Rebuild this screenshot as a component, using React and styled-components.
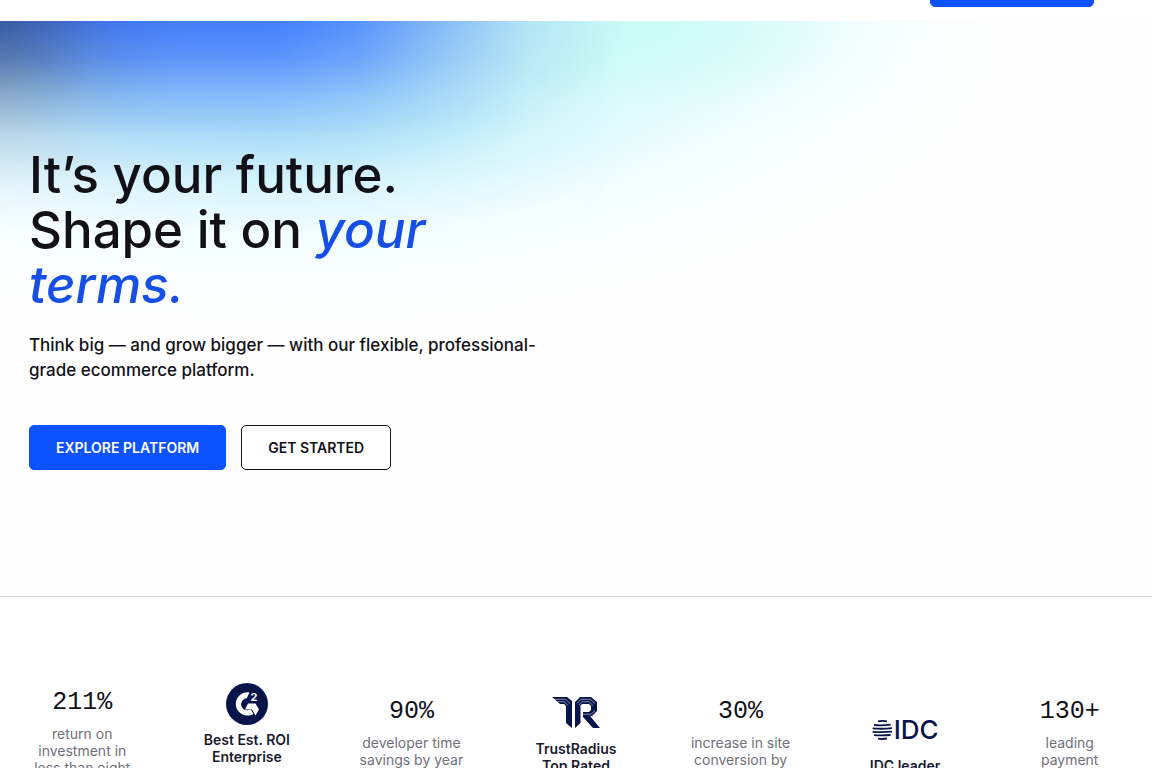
import React from "react";
import styled, { createGlobalStyle } from "styled-components";

const GlobalStyle = createGlobalStyle`
  * {
    box-sizing: border-box;
  }
  body {
    margin: 0;
    background: #fff;
    color: #121118;
    font-family: Inter, "Liberation Sans", sans-serif;
  }
  h1,
  p {
    margin: 0;
  }
`;

const Page = styled.div`
  height: 100vh;
  overflow: hidden;
`;

const Header = styled.header`
  display: flex;
  justify-content: flex-end;
  align-items: flex-end;
  height: 21px;
  padding: 0 58px 14px;
  overflow: hidden;
`;

const Button = styled.button`
  flex-shrink: 0;
  height: 45px;
  min-width: ${(props) => (props.$wide ? "164px" : "0")};
  padding: 0 26px;
  border: 1px solid ${(props) => (props.$outline ? "#121118" : "#0d52ff")};
  border-radius: 5px;
  background: ${(props) => (props.$outline ? "#fff" : "#0d52ff")};
  color: ${(props) => (props.$outline ? "#121118" : "#fff")};
  font-family: inherit;
  font-size: 14px;
  font-weight: 600;
  text-transform: uppercase;
  cursor: pointer;
`;

const Hero = styled.section`
  position: relative;
  isolation: isolate;
  display: grid;
  grid-template-columns: 1fr 1fr;
  column-gap: 29px;
  padding: 126px 29px;
  border-bottom: 1px solid #dcdce0;
  background:
    radial-gradient(
      ellipse 26% 130px at 56% 0,
      rgba(200, 250, 243, 0.85) 0%,
      rgba(205, 251, 244, 0.6) 40%,
      rgba(225, 252, 250, 0.25) 70%,
      rgba(245, 255, 255, 0) 100%
    ),
    radial-gradient(
      ellipse 64% 310px at 25% 0,
      #c2effb 0%,
      #c8f6f8 36%,
      #d8fafb 47%,
      #e6fbfd 58%,
      #f3feff 70%,
      #fafeff 82%,
      #fefefe 100%
    );

  /* blue glow along the top edge */
  &::before {
    content: "";
    position: absolute;
    inset: 0 0 auto;
    z-index: -1;
    height: 240px;
    background:
      radial-gradient(
        ellipse 11% 160px at 0 70px,
        rgba(80, 85, 105, 0.42) 0%,
        rgba(80, 85, 100, 0.2) 45%,
        rgba(80, 85, 100, 0) 100%
      ),
      linear-gradient(
        to right,
        #325ab4 0%,
        #4074e6 8%,
        #447cf8 15%,
        #447efc 24%,
        rgba(72, 132, 250, 0.88) 31%,
        rgba(84, 144, 245, 0.6) 38%,
        rgba(100, 160, 240, 0.22) 46%,
        rgba(140, 190, 240, 0) 54%
      );
    mask-image: linear-gradient(
      to bottom,
      #000 0,
      rgba(0, 0, 0, 0.8) 38px,
      rgba(0, 0, 0, 0.48) 76px,
      rgba(0, 0, 0, 0.22) 115px,
      rgba(0, 0, 0, 0.06) 160px,
      transparent 210px
    );
  }
`;

const Title = styled.h1`
  font-size: 51px;
  font-weight: 500;
  line-height: 55px;

  em {
    color: #164fe6;
  }
`;

const Lead = styled.p`
  margin-top: 21px;
  font-size: 17px;
  font-weight: 500;
  line-height: 25px;
`;

const Actions = styled.div`
  display: flex;
  gap: 15px;
  margin-top: 42px;
`;

const Stats = styled.section`
  display: grid;
  grid-template-columns: repeat(7, 1fr);
  align-items: center;
  padding: 86px 0;
`;

const Stat = styled.div`
  display: flex;
  flex-direction: column;
  align-items: center;
  padding: 0 29px;
  text-align: center;
`;

const Figure = styled.p`
  margin-bottom: 8px;
  font-family: "Liberation Mono", monospace;
  font-size: 25px;
  line-height: 28px;
`;

const Caption = styled.p`
  color: ${(props) => (props.$strong ? "#1a1a2e" : "#707078")};
  font-size: 14px;
  font-weight: ${(props) => (props.$strong ? 600 : 400)};
  line-height: 17px;
`;

const Logo = styled.div`
  display: flex;
  justify-content: center;
  align-items: center;
  gap: 1px;
  height: 42px;
  margin-bottom: 6px;
  color: #08154b;
  font-size: 26px;
  font-weight: 500;
`;

const G2Logo = () => (
  <svg width="42" height="42" viewBox="0 0 42 42" role="img" aria-label="G2">
    <circle cx="21" cy="21" r="21" fill="currentColor" />
    <path
      fill="#fff"
      d="M23.5 9.4 20.8 15.3A6 6 0 1 0 24.6 26.2L27.4 31A11.7 11.7 0 1 1 23.5 9.4Z"
    />
    <path fill="#fff" d="M22 20.5H29.5L33 26.5 29.500 32.500 26 26.5H19Z" />
    <text
      x="24.4"
      y="18"
      fill="#fff"
      fontFamily="Inter, sans-serif"
      fontSize="11"
      fontWeight="700"
    >
      2
    </text>
  </svg>
);

const TrustRadiusLogo = () => (
  <svg
    width="48"
    height="31"
    viewBox="0 0 48 31"
    role="img"
    aria-label="TrustRadius"
  >
    <g fill="currentColor">
      <path d="M0 0H15L20 4V31L14 26V9L12 7H8Z" />
      <path d="M23 5 28 0H39L45 5V14L40 19H38L48 31H41L31 20V15H37L39 13V9L37 7H30L28.5 8.5V26L23 31Z" />
    </g>
    <g fill="none" stroke="#fff" strokeWidth="0.5">
      <path d="M1 2.3H13.5L18 6.5M4 4.7H12.5L16 8.5" />
      <path d="M25 6.5 29 2.3H38L43 6.5M27 8 30 4.7H37L41 8.5M31 17.3H39L43 13.5" />
    </g>
  </svg>
);

const GlobeIcon = () => (
  <svg width="21" height="20" viewBox="0 0 21 20" aria-hidden="true">
    <path
      fill="none"
      stroke="currentColor"
      strokeWidth="1.8"
      d="M6 1.4Q10.5.4 15 1.4M2 5Q10 5.8 18.6 4.6M.6 8.4Q10 9.2 20 8.2M.6 11.8Q10 12.4 20 11.6M2 15.2Q10 15.8 18.6 15M6 18.6Q10.5 19.4 15 18.5"
    />
  </svg>
);

const stats = [
  { figure: "211%", text: "return on investment in less than eight months" },
  { logo: <G2Logo />, text: "Best Est. ROI Enterprise Leader Winter Report" },
  { figure: "90%", text: "developer time savings by year three" },
  { logo: <TrustRadiusLogo />, text: "TrustRadius Top Rated Platform" },
  { figure: "30%", text: "increase in site conversion by year three" },
  {
    logo: (
      <>
        <GlobeIcon />
        IDC
      </>
    ),
    text: "IDC leader",
  },
  { figure: "130+", text: "leading payment providers" },
];

const App = () => {
  return (
    <Page>
      <GlobalStyle />
      <Header>
        <Button $wide aria-label="Request a demo" />
      </Header>
      <main>
        <Hero>
          <div>
            <Title>
              It’s your future.
              <br />
              Shape it on <em>your terms.</em>
            </Title>
            <Lead>
              Think big — and grow bigger — with our flexible,
              professional-grade ecommerce platform.
            </Lead>
            <Actions>
              <Button>Explore platform</Button>
              <Button $outline>Get started</Button>
            </Actions>
          </div>
        </Hero>
        <Stats>
          {stats.map((stat) => (
            <Stat key={stat.text}>
              {stat.logo ? (
                <Logo>{stat.logo}</Logo>
              ) : (
                <Figure>{stat.figure}</Figure>
              )}
              <Caption $strong={Boolean(stat.logo)}>{stat.text}</Caption>
            </Stat>
          ))}
        </Stats>
      </main>
    </Page>
  );
};

export default App;
